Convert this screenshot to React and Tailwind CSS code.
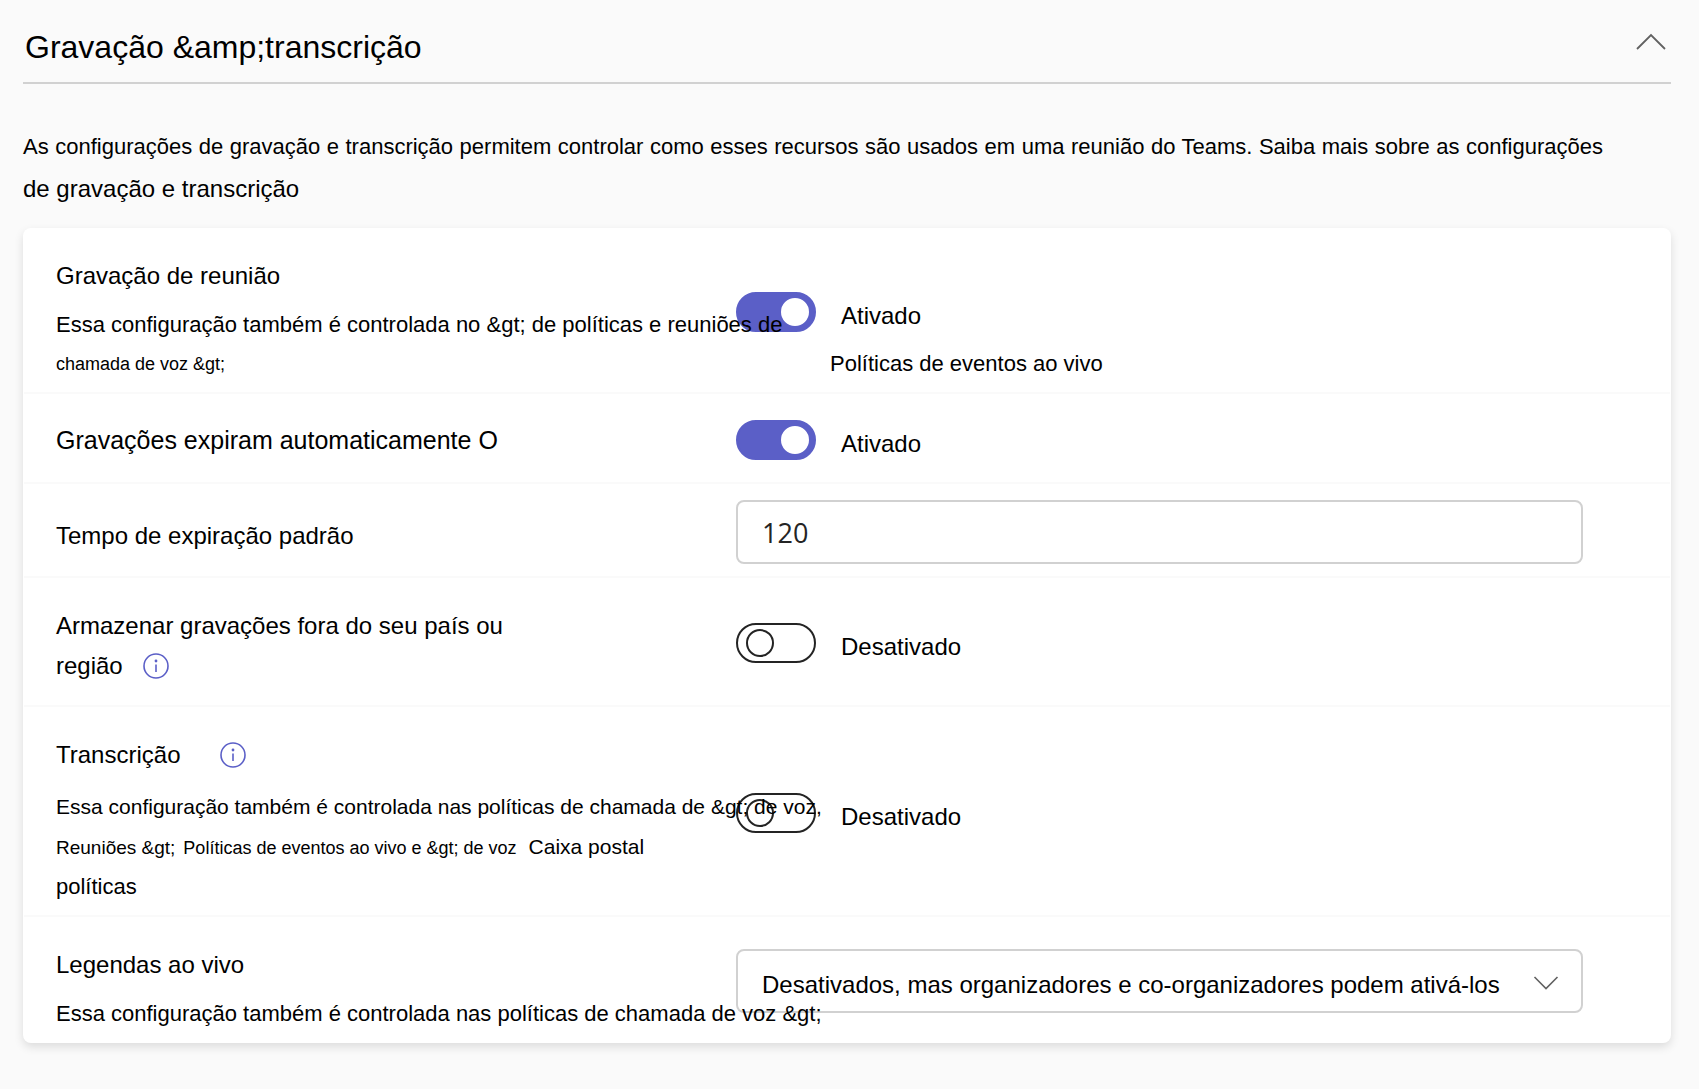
import { useState } from 'react';

function Toggle({ id, checked, onChange, name }) {
  return (
    <div className="flex items-center gap-[25px]">
      <input
        id={id}
        type="checkbox"
        role="switch"
        aria-label={name}
        checked={checked}
        onChange={(e) => onChange(e.target.checked)}
        className="flex h-10 w-20 shrink-0 cursor-pointer appearance-none items-center rounded-full border-2 border-[#242424]
                   before:ml-2 before:block before:size-7 before:rounded-full before:border-2 before:border-[#242424] before:content-['']
                   checked:border-[#5b5fc7] checked:bg-[#5b5fc7] checked:before:ml-[43px] checked:before:border-white checked:before:bg-white"
      />
      <label htmlFor={id} className="pt-2 text-[24px] leading-8">
        {checked ? 'Ativado' : 'Desativado'}
      </label>
    </div>
  );
}

function InfoButton({ label }) {
  return (
    <button type="button" aria-label={label} className="shrink-0 text-[#5b5fc7]">
      <svg width="26" height="26" viewBox="0 0 26 26" fill="none" className="block">
        <circle cx="13" cy="13" r="12" stroke="currentColor" strokeWidth="1.6" />
        <circle cx="13" cy="8" r="1.4" fill="currentColor" />
        <path d="M13 11.5v7.5" stroke="currentColor" strokeWidth="1.6" />
      </svg>
    </button>
  );
}

function Row({ className, children }) {
  return (
    <div className={`mx-px grid grid-cols-[minmax(0,680fr)_minmax(0,847fr)] pr-[87px] pl-8 ${className}`}>
      {children}
    </div>
  );
}

export default function App() {
  const [open, setOpen] = useState(true);
  const [recording, setRecording] = useState(true);
  const [expire, setExpire] = useState(true);
  const [storeOutside, setStoreOutside] = useState(false);
  const [transcription, setTranscription] = useState(false);
  const [days, setDays] = useState('120');

  return (
    <main className="min-h-screen bg-[#fafafa] pr-7 pb-11 pl-[23px] font-['Liberation_Sans',Arial,sans-serif] text-black">
      <header className="flex items-start justify-between border-b-2 border-[#d1d1d1] pt-[27px] pr-1 pb-[15px] pl-[2px]">
        <h1 className="text-[32px] leading-10">Gravação &amp;amp;transcrição</h1>
        <button type="button" aria-label="Recolher seção" aria-expanded={open} onClick={() => setOpen(!open)}>
          <svg width="32" height="32" viewBox="0 0 32 32" fill="none" className="block text-[#616161]">
            <path d="M2 22L16 8l14 14" stroke="currentColor" strokeWidth="1.8" />
          </svg>
        </button>
      </header>

      {open && (
        <>
          <p className="mt-[42px] mb-[17px] pr-[68px] text-justify text-[22px] leading-[42px]">
            As configurações de gravação e transcrição permitem controlar como esses recursos são usados em uma
            reunião do Teams. Saiba mais sobre as configurações{' '}
            <span className="text-[24px]">de gravação e transcrição</span>
          </p>

          <section className="rounded-lg bg-white shadow-[0_4px_10px_rgba(0,0,0,0.12)]">
            {/* Meeting recording */}
            <Row className="border-b-2 border-[#fafafa] pt-8 pb-[9px]">
              <div className="relative z-10 whitespace-nowrap">
                <h2 className="text-[24px] leading-8">Gravação de reunião</h2>
                <p className="mt-[13px] text-[22px] leading-10">
                  Essa configuração também é controlada no &amp;gt; de políticas e reuniões de
                </p>
                <p className="text-[18px] leading-[38px]">chamada de voz &amp;gt;</p>
              </div>
              <div className="pt-8">
                <Toggle id="recording" name="Gravação de reunião" checked={recording} onChange={setRecording} />
                <p className="mt-4 pl-[94px] text-[22px] leading-8">Políticas de eventos ao vivo</p>
              </div>
            </Row>

            {/* Automatic expiration */}
            <Row className="items-center border-b-2 border-[#fafafa] pt-[26px] pb-[22px]">
              <h2 className="text-[25px] leading-8">Gravações expiram automaticamente O</h2>
              <Toggle id="expire" name="Gravações expiram automaticamente" checked={expire} onChange={setExpire} />
            </Row>

            <Row className="items-center border-b-2 border-[#fafafa] pt-4 pb-3">
              <label htmlFor="days" className="pt-2 text-[24px] leading-8">
                Tempo de expiração padrão
              </label>
              <input
                id="days"
                type="text"
                value={days}
                onChange={(e) => setDays(e.target.value)}
                className="h-16 w-full rounded-lg border-2 border-[#d1d1d1] bg-white px-6 font-['Open_Sans','Noto_Sans',sans-serif] text-[27px] text-[#242424]"
              />
            </Row>

            {/* Storage location */}
            <Row className="border-b-2 border-[#fafafa] pt-7 pb-[19px]">
              <div className="text-[24px] leading-10">
                <p>Armazenar gravações fora do seu país ou</p>
                <div className="flex items-center gap-5">
                  <span>região</span>
                  <InfoButton label="Informações sobre o local das gravações" />
                </div>
              </div>
              <div className="pt-[17px]">
                <Toggle id="store" name="Armazenar gravações fora do seu país ou região" checked={storeOutside} onChange={setStoreOutside} />
              </div>
            </Row>

            {/* Transcription */}
            <Row className="border-b-2 border-[#fafafa] pt-7 pb-2">
              <div className="relative z-10 whitespace-nowrap">
                <div className="flex items-center gap-10">
                  <h2 className="text-[24px] leading-10">Transcrição</h2>
                  <InfoButton label="Informações sobre transcrição" />
                </div>
                <p className="mt-3 text-[21px] leading-10">
                  Essa configuração também é controlada nas políticas de chamada de &amp;gt; de voz,
                </p>
                <div className="flex h-10 items-baseline leading-10">
                  <span className="mr-2 text-[19px]">Reuniões &amp;gt;</span>
                  <span className="mr-3 text-[18px]">Políticas de eventos ao vivo e &amp;gt; de voz</span>
                  <span className="text-[21px]">Caixa postal</span>
                </div>
                <p className="text-[22px] leading-10">políticas</p>
              </div>
              <div className="pt-[58px]">
                <Toggle id="transcription" name="Transcrição" checked={transcription} onChange={setTranscription} />
              </div>
            </Row>

            {/* Live captions */}
            <Row className="pt-8 pb-[9px]">
              <div className="relative z-10 whitespace-nowrap">
                <label htmlFor="captions" className="block text-[24px] leading-8">
                  Legendas ao vivo
                </label>
                <p className="mt-[13px] text-[22px] leading-10">
                  Essa configuração também é controlada nas políticas de chamada de voz &amp;gt;
                </p>
              </div>
              <div className="relative self-start">
                <select
                  id="captions"
                  className="block h-16 w-full appearance-none rounded-lg border-2 border-[#d1d1d1] bg-white pt-2 pr-16 pl-6 text-[24px]"
                >
                  <option>Desativados, mas organizadores e co-organizadores podem ativá-los</option>
                </select>
                <svg
                  width="26"
                  height="26"
                  viewBox="0 0 26 26"
                  fill="none"
                  className="pointer-events-none absolute top-5 right-6 text-[#616161]"
                >
                  <path d="M1.5 8L13 19.5 24.5 8" stroke="currentColor" strokeWidth="1.6" />
                </svg>
              </div>
            </Row>
          </section>
        </>
      )}
    </main>
  );
}
